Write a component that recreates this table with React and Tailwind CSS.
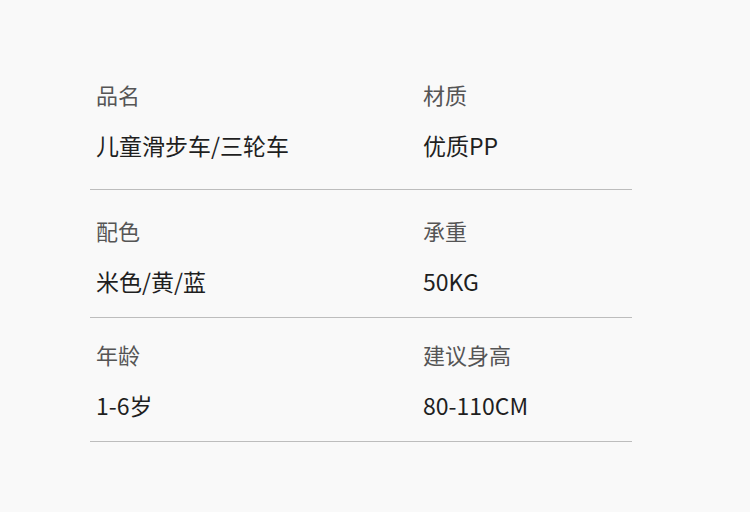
import React from 'react';

const rows = [
  { pt: 'pt-[79px]', pb: 'pb-[29px]', items: [['品名', '儿童滑步车/三轮车'], ['材质', '优质PP']] },
  { pt: 'pt-[25px]', pb: 'pb-[21px]', items: [['配色', '米色/黄/蓝'], ['承重', '50KG']] },
  { pt: 'pt-[21px]', pb: 'pb-[21px]', items: [['年龄', '1-6岁'], ['建议身高', '80-110CM']] },
];

const App = () => {
  return (
    <div
      className="w-[750px] h-[512px] bg-[#f9f9f9] overflow-hidden"
      style={{ fontFamily: '"Noto Sans CJK SC", "Noto Sans", sans-serif' }}
    >
      <div className="ml-[90px] w-[542px]">
        {rows.map((row, i) => (
          <div
            key={i}
            className={`grid grid-cols-[327px_1fr] px-[6px] border-b border-[#bdbdbd] ${row.pt} ${row.pb}`}
          >
            {row.items.map(([label, value]) => (
              <div key={label} className="flex flex-col gap-[21px]">
                <div className="text-[22px] leading-[30px] text-[#555555]">{label}</div>
                <div className="text-[23px] leading-[30px] text-[#1f1f1f]">{value}</div>
              </div>
            ))}
          </div>
        ))}
      </div>
    </div>
  );
};

export default App;
